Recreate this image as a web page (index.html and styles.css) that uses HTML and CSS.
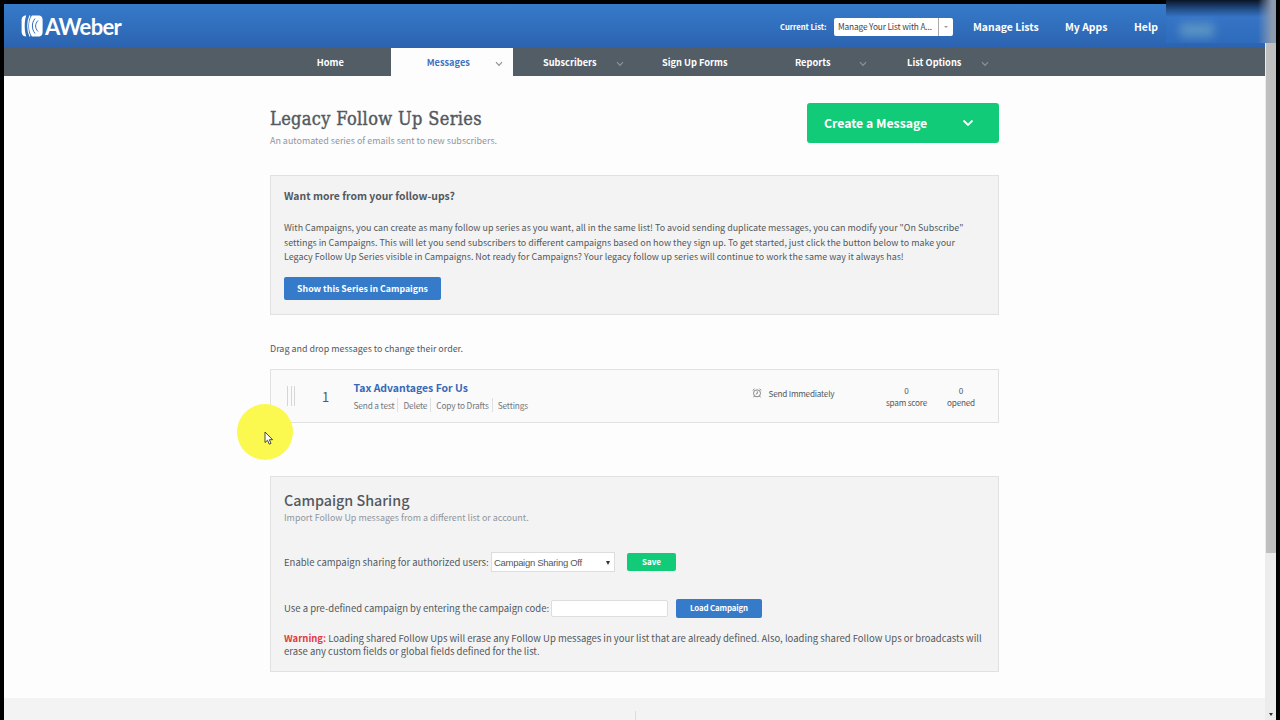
FILE: index.html
```
<!DOCTYPE html>
<html lang="en">
<head>
  <meta charset="UTF-8" />
  <title>Legacy Follow Up Series</title>
  <link rel="stylesheet" href="styles.css">
</head>
<body>

<div class="window">
  <div class="page">
    <header class="header">
      <div class="logo">
        <svg width="22" height="22" viewBox="0 0 22 22">
          <path d="M5.200 0.600C1.500 0.600 0.600 3 0.600 6V16C0.600 19 1.500 21.400 5.200 21.400C3.200 16 3.200 6 5.200 0.600Z" fill="#fff"/>
          <path d="M11 0.500H17C20.500 0.500 21.600 2 21.600 5.500V16.500C21.600 20 20.500 21.500 17 21.500H11C7 17 7 5 11 0.500Z" fill="#fff"/>
          <path d="M9 0.600C6 6 6 16 9 21.400" fill="none" stroke="#fff" stroke-width="1.100"/>
          <path d="M14 3.500C10.500 8 10.500 14 14 18.500M17 5.500C13.800 9 13.800 13 17 16.500" fill="none" stroke="#3170c0" stroke-width="1"/>
        </svg>
        <span class="logo-text">AWeber</span>
      </div>
      <div class="header-right">
        <span class="current-label">Current List:</span>
        <div class="list-picker"><span class="list-name">Manage Your List with A...</span><span class="list-arrow"></span></div>
        <a class="header-link manage">Manage Lists</a>
        <a class="header-link apps">My Apps</a>
        <a class="header-link help">Help</a>
      </div>
    </header>

    <nav class="nav">
      <a class="tab"><span>Home</span></a>
      <a class="tab active has-menu"><span>Messages</span><svg class="chevron" viewBox="0 0 8 6"><path d="M1 1.200L4 4.400L7 1.200"/></svg></a>
      <a class="tab has-menu"><span>Subscribers</span><svg class="chevron" viewBox="0 0 8 6"><path d="M1 1.200L4 4.400L7 1.200"/></svg></a>
      <a class="tab"><span>Sign Up Forms</span></a>
      <a class="tab has-menu"><span>Reports</span><svg class="chevron" viewBox="0 0 8 6"><path d="M1 1.200L4 4.400L7 1.200"/></svg></a>
      <a class="tab has-menu"><span>List Options</span><svg class="chevron" viewBox="0 0 8 6"><path d="M1 1.200L4 4.400L7 1.200"/></svg></a>
    </nav>

    <main class="content">
      <div class="title-row">
        <div>
          <h1>Legacy Follow Up Series</h1>
          <p class="subtitle">An automated series of emails sent to new subscribers.</p>
        </div>
        <div class="create-btn">
          <span>Create a Message</span>
          <svg width="12" height="8" viewBox="0 0 12 8"><path d="M1.500 1.500L6 6L10.500 1.500" fill="none" stroke="#fff" stroke-width="1.800"/></svg>
        </div>
      </div>

      <section class="panel promo">
        <h3>Want more from your follow-ups?</h3>
        <p>With Campaigns, you can create as many follow up series as you want, all in the same list! To avoid sending duplicate messages, you can modify your "On Subscribe"<br>
        settings in Campaigns. This will let you send subscribers to different campaigns based on how they sign up. To get started, just click the button below to make your<br>
        Legacy Follow Up Series visible in Campaigns. Not ready for Campaigns? Your legacy follow up series will continue to work the same way it always has!</p>
        <a class="btn show-btn">Show this Series in Campaigns</a>
      </section>

      <p class="drag-hint">Drag and drop messages to change their order.</p>

      <div class="message">
        <div class="handle"><i></i><i></i><i></i></div>
        <div class="number">1</div>
        <div class="message-info">
          <a class="message-title">Tax Advantages For Us</a>
          <div class="actions"><a>Send a test</a><a>Delete</a><a>Copy to Drafts</a><a>Settings</a></div>
        </div>
        <div class="send-time">
          <svg width="10" height="10" viewBox="0 0 10 10" fill="none" stroke="#777" stroke-width="0.900">
            <circle cx="5" cy="5.300" r="3.500"/>
            <path d="M0.700 2.500L2.500 0.800M7.500 0.800L9.300 2.500M5.300 3.300V5.500L3.800 6.200M2.500 8L1.500 9.300M7.500 8L8.500 9.300"/>
          </svg>
          <span>Send Immediately</span>
        </div>
        <div class="stat spam">0<br>spam score</div>
        <div class="stat opened">0<br>opened</div>
      </div>

      <section class="panel sharing">
        <h2>Campaign Sharing</h2>
        <p class="subtitle">Import Follow Up messages from a different list or account.</p>
        <div class="form-row enable-row">
          <span class="enable-label">Enable campaign sharing for authorized users:</span>
          <div class="select"><span>Campaign Sharing Off</span><span class="select-arrow"></span></div>
          <a class="btn save-btn">Save</a>
        </div>
        <div class="form-row code-row">
          <span class="code-label">Use a pre-defined campaign by entering the campaign code:</span>
          <input class="code-input" type="text">
          <a class="btn load-btn">Load Campaign</a>
        </div>
        <p class="warning"><strong>Warning:</strong> Loading shared Follow Ups will erase any Follow Up messages in your list that are already defined. Also, loading shared Follow Ups or broadcasts will<br>erase any custom fields or global fields defined for the list.</p>
      </section>
    </main>

    <footer class="footer"><i></i></footer>
  </div>

  <div class="scrollbar"><div class="thumb"></div><div class="scroll-down"></div></div>
</div>

<div class="account"><div class="account-blur"></div></div>
<div class="click-spot"></div>
<svg class="cursor" width="10" height="15" viewBox="0 0 10 15"><path d="M1 1V11.500L3.500 9.300L5.300 13.200L7 12.400L5.300 8.700H8.600Z" fill="#fff" stroke="#333" stroke-width="0.900"/></svg>

</body>
</html>
```

FILE: styles.css
```
* {
  box-sizing: border-box;
  margin: 0;
  padding: 0;
}

body {
  width: 1280px;
  height: 720px;
  overflow: hidden;
  background: #000;
  font-family: "Noto Sans CJK SC", "Open Sans", sans-serif;
  font-size: 8.93px;
  color: #53595e;
}

.window {
  display: flex;
  height: 720px;
  padding: 4px 4px 0 4px;
}

.page {
  display: flex;
  flex-direction: column;
  width: 1261px;
  background: #fdfdfd;
  white-space: nowrap;
}

.header {
  display: flex;
  justify-content: space-between;
  height: 44px;
  padding-left: 17px;
  background: linear-gradient(#367bca, #2c63b0);
  color: #fff;
  font-weight: bold;
}

.logo {
  display: flex;
  align-items: center;
  gap: 2px;
}

.logo-text {
  padding-top: 2px;
  font-family: Lato, sans-serif;
  font-size: 22px;
  letter-spacing: -0.7px;
  line-height: 44px;
}

.header-right {
  display: flex;
  align-items: center;
  width: 485px;
  height: 45px;
}

.current-label {
  width: 54px;
  font-size: 7.6px;
}

.list-picker {
  display: flex;
  width: 119px;
  height: 18px;
  border-radius: 2px;
  background: #fff;
  color: #444;
  font-size: 8.3px;
  font-weight: normal;
  letter-spacing: -0.15px;
  line-height: 17px;
}

.list-name {
  width: 105px;
  padding-left: 4px;
  border-right: 1px solid #aaa;
}

.list-arrow {
  margin: 8px 0 0 5px;
  border: 2px solid transparent;
  border-top-color: #999;
  height: 0;
}

.header-link {
  font-size: 10.4px;
}

.manage {
  width: 92px;
  margin-left: 20px;
}

.apps {
  width: 69px;
}

.nav {
  display: flex;
  height: 28px;
  padding-left: 265.5px;
  background: #525d66;
}

.tab {
  display: flex;
  align-items: center;
  width: 121.5px;
  color: #fff;
  font-size: 9.25px;
  font-weight: bold;
  line-height: 28px;
}

.tab span {
  flex: 1;
  text-align: center;
}

.has-menu {
  padding: 0 10px 0 11px;
}

.active {
  background: #fdfdfd;
  color: #3f72c4;
}

.chevron {
  width: 8px;
  height: 6px;
  margin-top: 3px;
  fill: none;
  stroke: #8b949b;
  stroke-width: 1.2;
}

.content {
  width: 729px;
  margin-left: 266px;
}

.title-row {
  display: flex;
  justify-content: space-between;
  height: 99px;
  padding-top: 27px;
}

h1 {
  margin-top: 1px;
  font-family: "DejaVu Serif Condensed", "DejaVu Serif", serif;
  font-size: 18px;
  font-weight: normal;
  letter-spacing: 0.37px;
  line-height: 30px;
  -webkit-text-stroke: 0.4px #53595e;
}

.subtitle {
  color: #90969e;
  line-height: 14px;
}

.create-btn {
  display: flex;
  align-items: center;
  justify-content: space-between;
  width: 192px;
  height: 40px;
  padding: 0 25px 0 17px;
  border-radius: 3px;
  background: #12cb78;
  color: #fff;
  font-size: 12.25px;
  font-weight: bold;
}

.panel {
  padding: 0 13px;
  border: 1px solid #e1e1e1;
  background: #f3f3f3;
}

.promo {
  height: 140px;
}

h3 {
  margin-top: 11px;
  font-size: 10.4px;
  line-height: 18px;
}

.promo p {
  margin-top: 16px;
  line-height: 14.6px;
}

.btn {
  display: block;
  border-radius: 2px;
  background: #367bca;
  color: #fff;
  font-weight: bold;
  text-align: center;
}

.show-btn {
  width: 157px;
  height: 23px;
  margin-top: 12px;
  font-size: 8.75px;
  line-height: 24px;
}

.drag-hint {
  margin: 27px 0 13px;
  line-height: 14px;
}

.message {
  display: flex;
  height: 54px;
  border: 1px solid #e1e1e1;
  background: #fafafa;
}

.handle {
  display: flex;
  gap: 2px;
  margin: 16px 0 0 16px;
  height: 20px;
}

.handle i {
  width: 1px;
  background: #d6d6d6;
}

.handle i + i {
  margin-left: 0.5px;
}

.number {
  width: 58.5px;
  margin-top: 17px;
  padding-left: 27px;
  font-size: 13px;
  line-height: 20px;
}

.message-info {
  width: 398px;
}

.message-title {
  display: block;
  margin-top: 10px;
  color: #3668b8;
  font-size: 10.45px;
  font-weight: bold;
  line-height: 16px;
}

.actions {
  display: flex;
  margin-top: 2px;
  color: #71777c;
  font-size: 8.3px;
  letter-spacing: -0.15px;
  line-height: 14px;
}

.actions a + a {
  margin-left: 3px;
  padding-left: 5px;
  border-left: 1px solid #e0e0e0;
}

.send-time {
  display: flex;
  align-items: center;
  gap: 7px;
  width: 125px;
  height: 14px;
  margin-top: 16px;
  font-size: 8.2px;
  letter-spacing: -0.22px;
}

.stat {
  margin-top: 15px;
  font-size: 8.2px;
  letter-spacing: -0.22px;
  line-height: 11.5px;
  text-align: center;
}

.spam {
  width: 60px;
}

.opened {
  width: 49px;
}

.sharing {
  height: 196px;
  margin-top: 53px;
}

h2 {
  margin-top: 12px;
  font-size: 14.3px;
  font-weight: 500;
  line-height: 22px;
}

.form-row {
  display: flex;
  align-items: center;
  font-size: 9.5px;
  line-height: 18px;
}

.enable-row {
  height: 20px;
  margin-top: 27px;
}

.enable-label {
  width: 207px;
}

.select {
  display: flex;
  align-items: center;
  justify-content: space-between;
  width: 124px;
  height: 20px;
  padding: 1px 4px 0 2px;
  border: 1px solid #ddd;
  background: #fff;
  font-family: "Liberation Sans", Arial, sans-serif;
  font-size: 9.5px;
  letter-spacing: -0.3px;
}

.select-arrow {
  border: 2px solid transparent;
  border-top: 4px solid #333;
  border-bottom: 0;
}

.save-btn {
  width: 49px;
  height: 18px;
  margin-left: 12px;
  background: #12cb78;
  font-size: 8px;
}

.code-row {
  height: 20px;
  margin-top: 26px;
}

.code-label {
  width: 267px;
}

.code-input {
  width: 117px;
  height: 17px;
  border: 1px solid #ddd;
  border-radius: 2px;
  background: #fff;
}

.load-btn {
  width: 86px;
  height: 19px;
  margin-left: 8px;
  font-size: 7.8px;
  letter-spacing: -0.1px;
}

.warning {
  margin-top: 14px;
  font-size: 9.5px;
  line-height: 13px;
}

.warning strong {
  color: #e13c3f;
}

.footer {
  flex: 1;
  margin-top: 26px;
  padding: 13px 0 0 631px;
  background: #f3f3f3;
}

.footer i {
  display: block;
  width: 1px;
  height: 20px;
  background: #ddd;
}

.scrollbar {
  display: flex;
  flex-direction: column;
  justify-content: space-between;
  width: 11px;
  padding-left: 1px;
  background: #ececec;
}

.thumb {
  height: 549px;
  background: #bfbfbf;
}

.scroll-down {
  align-self: center;
  margin-bottom: 4px;
  border: 2px solid transparent;
  border-top: 3px solid #333;
  border-bottom: 0;
}

/* blurred account name */
.account {
  position: absolute;
  left: 1166px;
  top: 0;
  width: 110px;
  height: 43px;
  overflow: hidden;
  background: linear-gradient(90deg, transparent 92px, #8b9ab0 106px), linear-gradient(#0b1527, #24528f 10px, #3674c7 17px, #2f6bbb);
}

.account-blur {
  width: 34px;
  height: 14px;
  margin: 23px 0 0 14px;
  background: #5a93c4;
  filter: blur(5px);
}

.click-spot {
  position: absolute;
  left: 237px;
  top: 404px;
  width: 56px;
  height: 56px;
  border-radius: 50%;
  background: #fbf950;
}

.cursor {
  position: absolute;
  left: 264px;
  top: 431px;
}
```
